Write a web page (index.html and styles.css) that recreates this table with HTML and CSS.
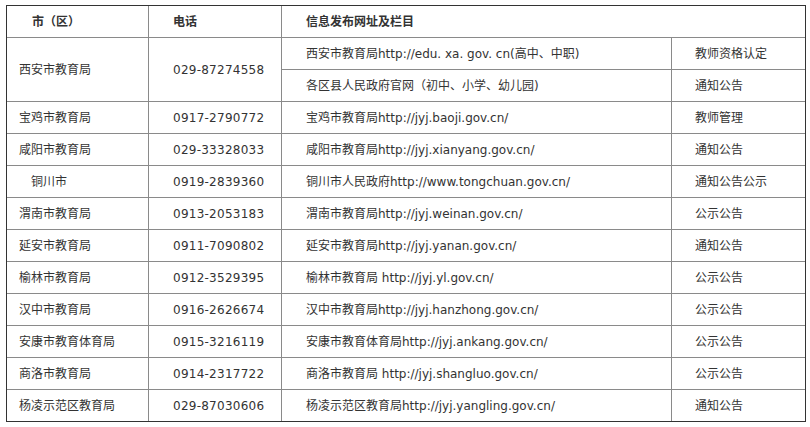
FILE: index.html
```
<!DOCTYPE html>
<html lang="zh-CN">
<head>
<meta charset="utf-8">
<title>各市教育局信息发布</title>
<link rel="stylesheet" href="styles.css">
</head>
<body>
<table class="info">
  <colgroup>
    <col class="c-city">
    <col class="c-tel">
    <col class="c-url">
    <col class="c-col">
  </colgroup>
  <tr class="head">
    <th class="city">市（区）</th>
    <th>电话</th>
    <th colspan="2">信息发布网址及栏目</th>
  </tr>
  <tr>
    <td class="city" rowspan="2">西安市教育局</td>
    <td class="tel" rowspan="2">029-87274558</td>
    <td>西安市教育局http://edu. xa. gov. cn(高中、中职)</td>
    <td>教师资格认定</td>
  </tr>
  <tr>
    <td>各区县人民政府官网（初中、小学、幼儿园)</td>
    <td>通知公告</td>
  </tr>
  <tr>
    <td class="city">宝鸡市教育局</td>
    <td class="tel">0917-2790772</td>
    <td>宝鸡市教育局http://jyj.baoji.gov.cn/</td>
    <td>教师管理</td>
  </tr>
  <tr>
    <td class="city">咸阳市教育局</td>
    <td class="tel">029-33328033</td>
    <td>咸阳市教育局http://jyj.xianyang.gov.cn/</td>
    <td>通知公告</td>
  </tr>
  <tr>
    <td class="city">&#12288;铜川市</td>
    <td class="tel">0919-2839360</td>
    <td>铜川市人民政府http://www.tongchuan.gov.cn/</td>
    <td>通知公告公示</td>
  </tr>
  <tr>
    <td class="city">渭南市教育局</td>
    <td class="tel">0913-2053183</td>
    <td>渭南市教育局http://jyj.weinan.gov.cn/</td>
    <td>公示公告</td>
  </tr>
  <tr>
    <td class="city">延安市教育局</td>
    <td class="tel">0911-7090802</td>
    <td>延安市教育局http://jyj.yanan.gov.cn/</td>
    <td>通知公告</td>
  </tr>
  <tr>
    <td class="city">榆林市教育局</td>
    <td class="tel">0912-3529395</td>
    <td>榆林市教育局 http://jyj.yl.gov.cn/</td>
    <td>公示公告</td>
  </tr>
  <tr>
    <td class="city">汉中市教育局</td>
    <td class="tel">0916-2626674</td>
    <td>汉中市教育局http://jyj.hanzhong.gov.cn/</td>
    <td>公示公告</td>
  </tr>
  <tr>
    <td class="city">安康市教育体育局</td>
    <td class="tel">0915-3216119</td>
    <td>安康市教育体育局http://jyj.ankang.gov.cn/</td>
    <td>公示公告</td>
  </tr>
  <tr>
    <td class="city">商洛市教育局</td>
    <td class="tel">0914-2317722</td>
    <td>商洛市教育局 http://jyj.shangluo.gov.cn/</td>
    <td>公示公告</td>
  </tr>
  <tr>
    <td class="city">杨凌示范区教育局</td>
    <td class="tel">029-87030606</td>
    <td>杨凌示范区教育局http://jyj.yangling.gov.cn/</td>
    <td>通知公告</td>
  </tr>
</table>
</body>
</html>
```
FILE: styles.css
```
html, body {
  background: #ffffff;
}
body {
  margin: 5px 0 0 6px;
  font-family: "DejaVu Sans", "Noto Sans CJK SC", sans-serif;
  font-size: 12px;
  color: #333333;
}
.info {
  border: 1px solid #333333;
  border-collapse: separate;
  border-spacing: 0;
  table-layout: fixed;
  width: 800px;
}
.c-city { width: 142px; }
.c-tel { width: 133px; }
.c-url { width: 390px; }
.c-col { width: 133px; }
.info th,
.info td {
  height: 31px;
  padding: 0 0 0 24px;
  border-right: 1px solid #8a8a8a;
  border-bottom: 1px solid #8a8a8a;
  text-align: left;
  vertical-align: middle;
  white-space: nowrap;
  line-height: 16px;
}
.info th {
  font-weight: bold;
}
.info td.city {
  padding-left: 12px;
}
.info th.city {
  padding-left: 25px;
}
.info td.tel {
  letter-spacing: 0.25px;
}
.info tr > :last-child {
  border-right: none;
}
.info tr:last-child > td {
  border-bottom: none;
}
.info td:last-child {
  padding-left: 23px;
}
```
